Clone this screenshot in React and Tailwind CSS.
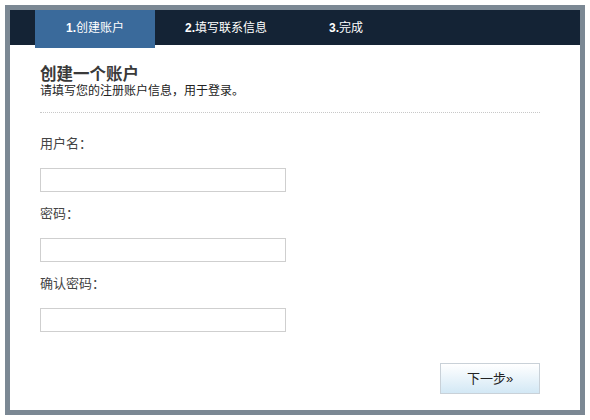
import React from "react";

const fields = ["用户名：", "密码：", "确认密码："];

export default function App() {
  return (
    <div
      className="w-[590px] h-[420px] bg-white p-[5px]"
      style={{ fontFamily: '"Liberation Sans", "Noto Sans CJK SC", sans-serif' }}
    >
      <div className="h-full border-[5px] border-[#7b8894] bg-white flex flex-col">
        {/* steps */}
        <div className="h-[35px] bg-[#142335] flex pl-[25px] shrink-0 text-white text-[12px] leading-[36px]">
          <div className="w-[120px] h-[38px] bg-[#3a6a9b] text-center relative z-10">
            <span className="font-bold">1.</span>创建账户
          </div>
          <div className="w-[174px] pl-[30px]">
            <span className="font-bold">2.</span>填写联系信息
          </div>
          <div>
            <span className="font-bold">3.</span>完成
          </div>
        </div>

        <div className="flex-1 pl-[30px] pr-[40px] flex flex-col">
          <h2 className="mt-[20px] text-[16.5px] leading-[18px] font-bold text-[#3a3a3a]">
            创建一个账户
          </h2>
          <p className="text-[12px] leading-[16px] text-[#222]">
            请填写您的注册账户信息，用于登录。
          </p>
          <div className="mt-[13px] border-t border-dotted border-[#c8c8c8]"></div>

          <div className="mt-[9px]">
            {fields.map((f, i) => (
              <div key={i}>
                <div className="mt-[12px] mb-[14px] h-[20px] leading-[20px] text-[13px] text-[#444]">
                  {f}
                </div>
                <input
                  type={i === 0 ? "text" : "password"}
                  className="block w-[246px] h-[24px] border border-[#cfcfcf] bg-white outline-none"
                />
              </div>
            ))}
          </div>

          <div className="flex justify-end mt-[31px]">
            <button className="w-[100px] h-[31px] border border-[#c9d1d8] bg-gradient-to-b from-white to-[#d3e8f5] text-[13px] text-[#222]">
              下一步»
            </button>
          </div>
        </div>
      </div>
    </div>
  );
}
